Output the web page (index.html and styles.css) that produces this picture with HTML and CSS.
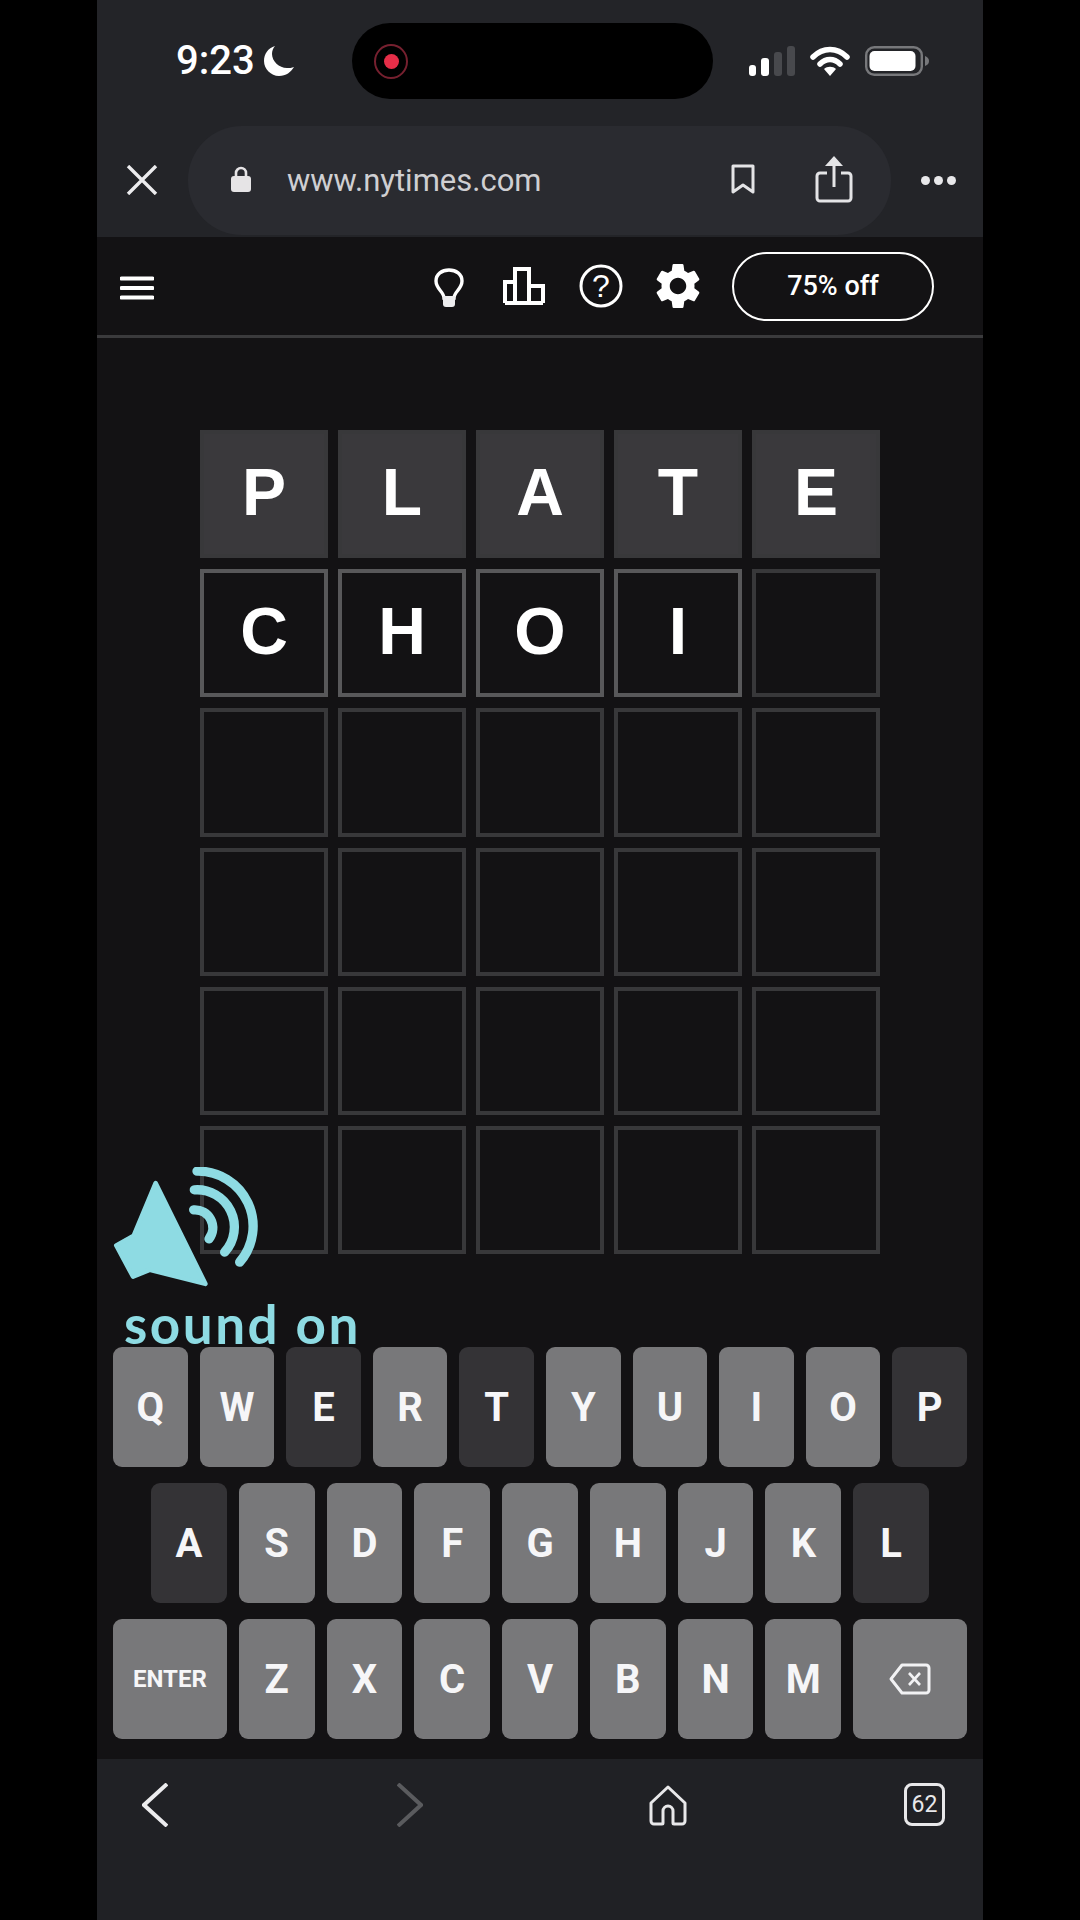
FILE: index.html
```html
<!DOCTYPE html>
<html lang="en">
<head>
<meta charset="utf-8">
<title>Wordle</title>
<link rel="stylesheet" href="styles.css">
</head>
<body>
<div class="phone">
  <div class="chrome">
    <div class="status">
      <div class="time-group">
        <span class="time">9:23</span>
        <svg class="moon" viewBox="0 0 30 30"><path d="M11 0C4 2 0 8 0 15c0 8 7 15 15 15 7 0 12-4 15-9-2 1-5 1-7 1C15 22 8 15 8 8c0-3 1-6 3-8z" fill="#fff"/></svg>
      </div>
      <div class="island">
        <span class="rec"><span class="rec-dot"></span></span>
      </div>
      <div class="sys">
        <svg class="signal" viewBox="0 0 46 30">
          <rect x="0" y="19" width="7" height="11" rx="3" fill="#fff"/>
          <rect x="12" y="12" width="8" height="18" rx="3" fill="#fff"/>
          <rect x="25" y="6" width="8" height="24" rx="3" fill="#48494d"/>
          <rect x="38" y="0" width="8" height="30" rx="3" fill="#48494d"/>
        </svg>
        <svg class="wifi" viewBox="0 0 40 30">
          <path d="M3 11C13 1 27 1 37 11" fill="none" stroke="#fff" stroke-width="5.500" stroke-linecap="round"/>
          <path d="M10 18c6-6 14-6 20 0" fill="none" stroke="#fff" stroke-width="5.500" stroke-linecap="round"/>
          <path d="M20 30l-6-7c3-3 9-3 12 0z" fill="#fff"/>
        </svg>
        <svg class="battery" viewBox="0 0 65 30">
          <rect x="1.200" y="1.200" width="55.600" height="27.600" rx="8" fill="none" stroke="#77787b" stroke-width="2.400"/>
          <rect x="4.500" y="5" width="46" height="20" rx="5" fill="#fff"/>
          <path d="M60 10c3 1 4 3 4 5s-1 4-4 5z" fill="#77787b"/>
        </svg>
      </div>
    </div>
    <div class="urlrow">
      <svg class="close" viewBox="0 0 32 30"><path d="M2 1l28 28M30 1L2 29" stroke="#ececee" stroke-width="3.400" fill="none"/></svg>
      <div class="pill">
        <svg class="lock" viewBox="0 0 20 26"><path d="M5 12V7a5 5 0 0 1 10 0v5" fill="none" stroke="#e6e4e6" stroke-width="2.600"/><rect x="0" y="10" width="20" height="16" rx="3" fill="#e6e4e6"/></svg>
        <span class="url">www.nytimes.com</span>
        <svg class="bookmark" viewBox="0 0 24 30"><path d="M2 2h20v26l-10-7-10 7z" fill="none" stroke="#e4e4e6" stroke-width="3" stroke-linejoin="round"/></svg>
        <svg class="share" viewBox="0 0 38 48"><path d="M12 18H5a3 3 0 0 0-3 3v22a3 3 0 0 0 3 3h28a3 3 0 0 0 3-3V21a3 3 0 0 0-3-3h-7" fill="none" stroke="#e4e4e6" stroke-width="3"/><path d="M19 32V3" stroke="#e4e4e6" stroke-width="3" fill="none"/><path d="M10 11l9-10 9 10z" fill="#e4e4e6"/></svg>
      </div>
      <div class="dots"><i></i><i></i><i></i></div>
    </div>
  </div>

  <header class="gamebar">
    <svg class="menu" viewBox="0 0 34 24"><path d="M1.500 2.500h31M1.500 12h31M1.500 21.500h31" stroke="#fff" stroke-width="4" stroke-linecap="round" fill="none"/></svg>
    <div class="tools">
      <span class="tool">
        <svg class="bulb" viewBox="0 0 32 40"><path d="M11 30c0-6-8-9-8-17C3 6 9 2 16 2s13 4 13 11c0 8-8 11-8 17z" fill="none" stroke="#fff" stroke-width="3.400"/><path d="M10 28h12v8a3 3 0 0 1-3 3h-6a3 3 0 0 1-3-3z" fill="#ececee"/></svg>
      </span>
      <span class="tool">
        <svg class="chart" viewBox="0 0 42 38"><path d="M2 36V15h10V36M12 36V2h14V36M26 36V19h14V36M2 36h38" fill="none" stroke="#fff" stroke-width="4"/></svg>
      </span>
      <span class="tool">
        <svg class="help" viewBox="0 0 44 44"><circle cx="22" cy="22" r="20" fill="none" stroke="#fff" stroke-width="3"/><text x="22" y="33" class="help-q" text-anchor="middle">?</text></svg>
      </span>
      <span class="tool">
        <svg class="gear" viewBox="2.400 2.400 19.200 19.200"><path fill="#fff" d="M19.140,12.940c0.040-0.300,0.060-0.610,0.060-0.940c0-0.320-0.020-0.640-0.070-0.940l2.030-1.580c0.180-0.140,0.230-0.410,0.120-0.610l-1.920-3.320c-0.120-0.220-0.370-0.290-0.590-0.220l-2.390,0.960c-0.500-0.380-1.030-0.700-1.620-0.940L14.400,2.810c-0.040-0.240-0.240-0.410-0.480-0.410h-3.840c-0.240,0-0.430,0.170-0.470,0.410L9.250,5.350C8.660,5.590,8.120,5.920,7.630,6.290L5.240,5.330c-0.220-0.080-0.470,0-0.590,0.220L2.740,8.870C2.620,9.080,2.660,9.340,2.860,9.480l2.030,1.580C4.840,11.360,4.800,11.690,4.800,12s0.020,0.640,0.070,0.940l-2.030,1.580c-0.180,0.140-0.230,0.410-0.120,0.610l1.920,3.320c0.120,0.220,0.370,0.290,0.590,0.220l2.390-0.960c0.500,0.380,1.030,0.700,1.620,0.940l0.360,2.540c0.050,0.240,0.240,0.410,0.480,0.410h3.840c0.240,0,0.440-0.170,0.470-0.410l0.360-2.540c0.590-0.240,1.130-0.560,1.620-0.940l2.390,0.960c0.220,0.080,0.470,0,0.590-0.220l1.920-3.320c0.120-0.220,0.070-0.470-0.120-0.610L19.140,12.940z M12,15.600c-1.980,0-3.600-1.620-3.600-3.600s1.620-3.600,3.600-3.600s3.600,1.620,3.600,3.600S13.980,15.600,12,15.600z"/></svg>
      </span>
      <span class="offer">75% off</span>
    </div>
  </header>

  <main class="board">
    <div class="tile done">P</div><div class="tile done">L</div><div class="tile done">A</div><div class="tile done">T</div><div class="tile done">E</div>
    <div class="tile typed">C</div><div class="tile typed">H</div><div class="tile typed">O</div><div class="tile typed">I</div><div class="tile"></div>
    <div class="tile"></div><div class="tile"></div><div class="tile"></div><div class="tile"></div><div class="tile"></div>
    <div class="tile"></div><div class="tile"></div><div class="tile"></div><div class="tile"></div><div class="tile"></div>
    <div class="tile"></div><div class="tile"></div><div class="tile"></div><div class="tile"></div><div class="tile"></div>
    <div class="tile"></div><div class="tile"></div><div class="tile"></div><div class="tile"></div><div class="tile"></div>
  </main>

  <div class="keyboard">
    <div class="keys">
      <span class="key">Q</span><span class="key">W</span><span class="key used">E</span><span class="key">R</span><span class="key used">T</span><span class="key">Y</span><span class="key">U</span><span class="key">I</span><span class="key">O</span><span class="key used">P</span>
    </div>
    <div class="keys inset">
      <span class="key used">A</span><span class="key">S</span><span class="key">D</span><span class="key">F</span><span class="key">G</span><span class="key">H</span><span class="key">J</span><span class="key">K</span><span class="key used">L</span>
    </div>
    <div class="keys">
      <span class="key wide enter">ENTER</span><span class="key">Z</span><span class="key">X</span><span class="key">C</span><span class="key">V</span><span class="key">B</span><span class="key">N</span><span class="key">M</span>
      <span class="key wide">
        <svg class="backspace" viewBox="0 0 42 32"><path d="M13 2h24a3 3 0 0 1 3 3v22a3 3 0 0 1-3 3H13L2 16z" fill="none" stroke="#f2f2f4" stroke-width="3" stroke-linejoin="round"/><path d="M20 10l11 12M31 10L20 22" stroke="#f2f2f4" stroke-width="2.600" fill="none"/></svg>
      </span>
    </div>
  </div>

  <nav class="nav">
    <span class="nav-item"><svg class="chev" viewBox="0 0 26 44"><path d="M25 1L2 22l23 21" fill="none" stroke="#ececee" stroke-width="4"/></svg></span>
    <span class="nav-item"><svg class="chev" viewBox="0 0 26 44"><path d="M1 1l23 21L1 43" fill="none" stroke="#5a5b5e" stroke-width="4"/></svg></span>
    <span class="nav-item"><svg class="home" viewBox="0 0 38 41"><path d="M19 2L2 18v18a3 3 0 0 0 3 3h8a1 1 0 0 0 1-1V26a5 5 0 0 1 10 0v12a1 1 0 0 0 1 1h8a3 3 0 0 0 3-3V18z" fill="none" stroke="#e8e8ea" stroke-width="3" stroke-linejoin="round"/></svg></span>
    <span class="nav-item"><span class="tabs">62</span></span>
  </nav>

  <div class="sound">
    <svg class="speaker" viewBox="70 110 435 362">
      <path d="M198 158L347 460 180 418 130 438 80 345 132 316z" fill="#8edbe3" stroke="#8edbe3" stroke-width="14" stroke-linejoin="round"/>
      <g fill="none" stroke="#8edbe3" stroke-width="28" stroke-linecap="round">
        <path d="M322 122A165 165 0 0 1 450 395"/>
        <path d="M314 178A112 112 0 0 1 405 365"/>
        <path d="M312 238A54 54 0 0 1 358 325"/>
      </g>
    </svg>
    <span class="sound-label">sound on</span>
  </div>
</div>
</body>
</html>
```
FILE: styles.css
```css
* { box-sizing: border-box; }
html, body { margin: 0; height: 1920px; background: #000; overflow: hidden; }
body { display: flex; justify-content: center; font-family: "Liberation Sans", Arial, sans-serif; color: #fff; }
.phone { position: relative; width: 886px; height: 1920px; background: #131214; display: flex; flex-direction: column; }
svg { display: block; }

.chrome { height: 237px; background: #232428; }
.status { display: flex; align-items: center; height: 99px; padding-top: 23px; }
.time-group { display: flex; align-items: center; margin-left: 79px; width: 118px; }
.time { font-family: Roboto, sans-serif; font-weight: 500; font-size: 40px; line-height: 44px; width: 88px; }
.moon { width: 30px; height: 30px; }
.island { display: flex; align-items: center; margin-left: 58px; width: 361px; height: 76px; background: #000; border-radius: 38px; padding-left: 22px; }
.rec { display: flex; align-items: center; justify-content: center; width: 34px; height: 35px; border-radius: 50%; border: 2px solid #76202f; }
.rec-dot { width: 15px; height: 15px; border-radius: 50%; background: #e62e48; }
.sys { display: flex; align-items: center; margin-left: 36px; }
.signal { width: 46px; height: 30px; }
.wifi { width: 40px; height: 30px; margin-left: 15px; }
.battery { width: 65px; height: 30px; margin-left: 15px; }

.urlrow { display: flex; align-items: center; height: 109px; margin-top: 27px; }
.close { width: 32px; height: 30px; margin-left: 29px; margin-top: -2px; }
.pill { display: flex; align-items: center; width: 703px; height: 109px; margin-left: 30px; padding: 0 38px 0 43px; border-radius: 54px; background: #2a2b30; }
.lock { width: 20px; height: 26px; margin-top: -3px; }
.url { font-family: Roboto, sans-serif; font-size: 31px; color: #cfcfd2; margin-left: 36px; }
.bookmark { width: 24px; height: 30px; margin-left: auto; margin-top: -4px; }
.share { width: 38px; height: 48px; margin-left: 60px; margin-top: -4px; }
.dots { display: flex; gap: 4px; margin-left: 30px; }
.dots i { width: 9px; height: 9px; border-radius: 50%; background: #e8e8ea; }

.gamebar { display: flex; align-items: center; justify-content: space-between; height: 101px; padding: 0 49px 0 23px; border-bottom: 3px solid #3a3a3c; }
.menu { width: 34px; height: 24px; margin-top: 4px; }
.tools { display: flex; align-items: center; gap: 32px; }
.tool { display: flex; align-items: center; justify-content: center; width: 44px; height: 44px; }
.bulb { width: 32px; height: 40px; margin: 3px 2px 0 0; }
.chart { width: 42px; height: 38px; margin-left: -4px; }
.help { width: 44px; height: 44px; margin-left: -2px; }
.help-q { font-family: "Liberation Sans", sans-serif; font-size: 32px; fill: #fff; }
.gear { width: 44px; height: 44px; }
.offer { display: flex; align-items: center; justify-content: center; width: 202px; height: 69px; border: 2.500px solid #fff; border-radius: 35px; font-family: Roboto, sans-serif; font-size: 27px; font-weight: 500; }

.board { display: grid; grid-template-columns: repeat(5, 128px); grid-template-rows: repeat(6, 1fr); column-gap: 10px; row-gap: 11px; width: 680px; height: 824px; margin: 92px 0 0 103px; }
.tile { display: flex; align-items: center; justify-content: center; padding-bottom: 4px; border: 4px solid #38383a; font-size: 66px; font-weight: 700; }
.tile.done { background: #3a393c; }
.tile.typed { border-color: #58585a; }

.keyboard { display: flex; flex-direction: column; gap: 16px; margin-top: 93px; padding: 0 16px 20px; }
.keys { display: flex; gap: 12px; height: 120px; }
.keys.inset { padding: 0 38px; }
.key { flex: 1 1 0; display: flex; align-items: center; justify-content: center; border-radius: 9px; background: #78787a; font-family: Roboto, sans-serif; font-size: 40px; font-weight: 700; color: #f6f6f8; }
.key.used { background: #343336; }
.key.wide { flex: 1.500 1 0; }
.key.enter { font-size: 24px; }
.backspace { width: 42px; height: 32px; }

.nav { display: grid; grid-template-columns: 255px 252px 255px auto; flex: 1; padding: 24px 0 0 45px; background: #202125; }
.nav-item { display: flex; height: 44px; }
.chev { width: 26px; height: 44px; }
.home { width: 38px; height: 41px; margin-top: 2px; }
.tabs { display: flex; align-items: center; justify-content: center; width: 41px; height: 43px; border: 3px solid #e8e8ea; border-radius: 8px; font-family: Roboto, sans-serif; font-size: 23px; color: #e8e8ea; }

.sound { position: absolute; left: 16px; top: 1167px; }
.speaker { width: 145px; height: 121px; }
.sound-label { position: absolute; left: 11px; top: 127px; font-family: Lato, sans-serif; font-weight: 700; font-size: 53px; line-height: 60px; letter-spacing: 2.500px; color: #8edbe3; white-space: nowrap; }
```
